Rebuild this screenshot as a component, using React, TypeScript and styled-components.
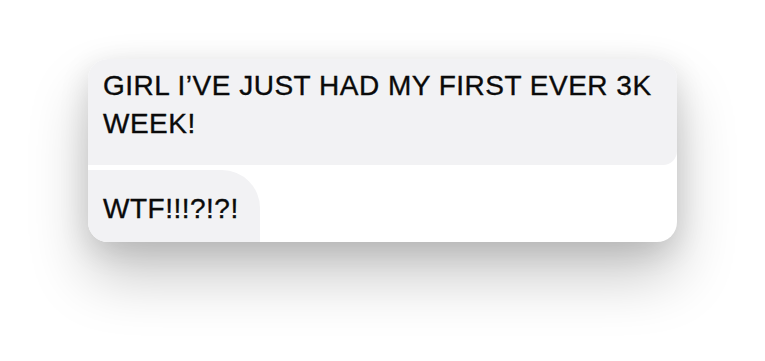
import React from "react";
import styled, { createGlobalStyle } from "styled-components";

const GlobalStyle = createGlobalStyle`
  html, body {
    margin: 0;
    padding: 0;
    background: #ffffff;
  }
  body {
    font-family: "Liberation Sans", Arial, sans-serif;
  }
`;

const App = () => {
  return (
    <Page>
      <GlobalStyle />
      <Card>
        <Bubble>GIRL I’VE JUST HAD MY FIRST EVER 3K WEEK!</Bubble>
        <Gap />
        <Bubble small>WTF!!!?!?!</Bubble>
      </Card>
    </Page>
  );
};

const Page = styled.div`
  width: 765px;
  height: 361px;
  display: flex;
  flex-direction: column;
  align-items: center;
  padding-top: 59px;
  box-sizing: border-box;
  overflow: hidden;
`;

const Card = styled.div`
  width: 589px;
  height: 183px;
  border-radius: 20px;
  background: #ffffff;
  overflow: hidden;
  display: flex;
  flex-direction: column;
  box-shadow: 0 34px 60px rgba(0, 0, 0, 0.22), 0 8px 30px rgba(0, 0, 0, 0.12);
`;

const Gap = styled.div`
  height: 5px;
  flex: none;
`;

interface BubbleProps {
  small?: boolean;
}

const Bubble = styled.div<BubbleProps>`
  background: #f2f2f4;
  color: #0a0a0a;
  font-size: 28px;
  line-height: 38px;
  letter-spacing: 0.5px;
  -webkit-text-stroke: 0.35px #0a0a0a;
  padding: ${(p) => (p.small ? "20px 15px 14px 15px" : "8px 20px 22px 15px")};
  width: ${(p) => (p.small ? "172px" : "auto")};
  box-sizing: border-box;
  border-radius: ${(p) => (p.small ? "0 38px 0 0" : "0 0 14px 0")};
  flex: ${(p) => (p.small ? "1" : "none")};
`;

export default App;
